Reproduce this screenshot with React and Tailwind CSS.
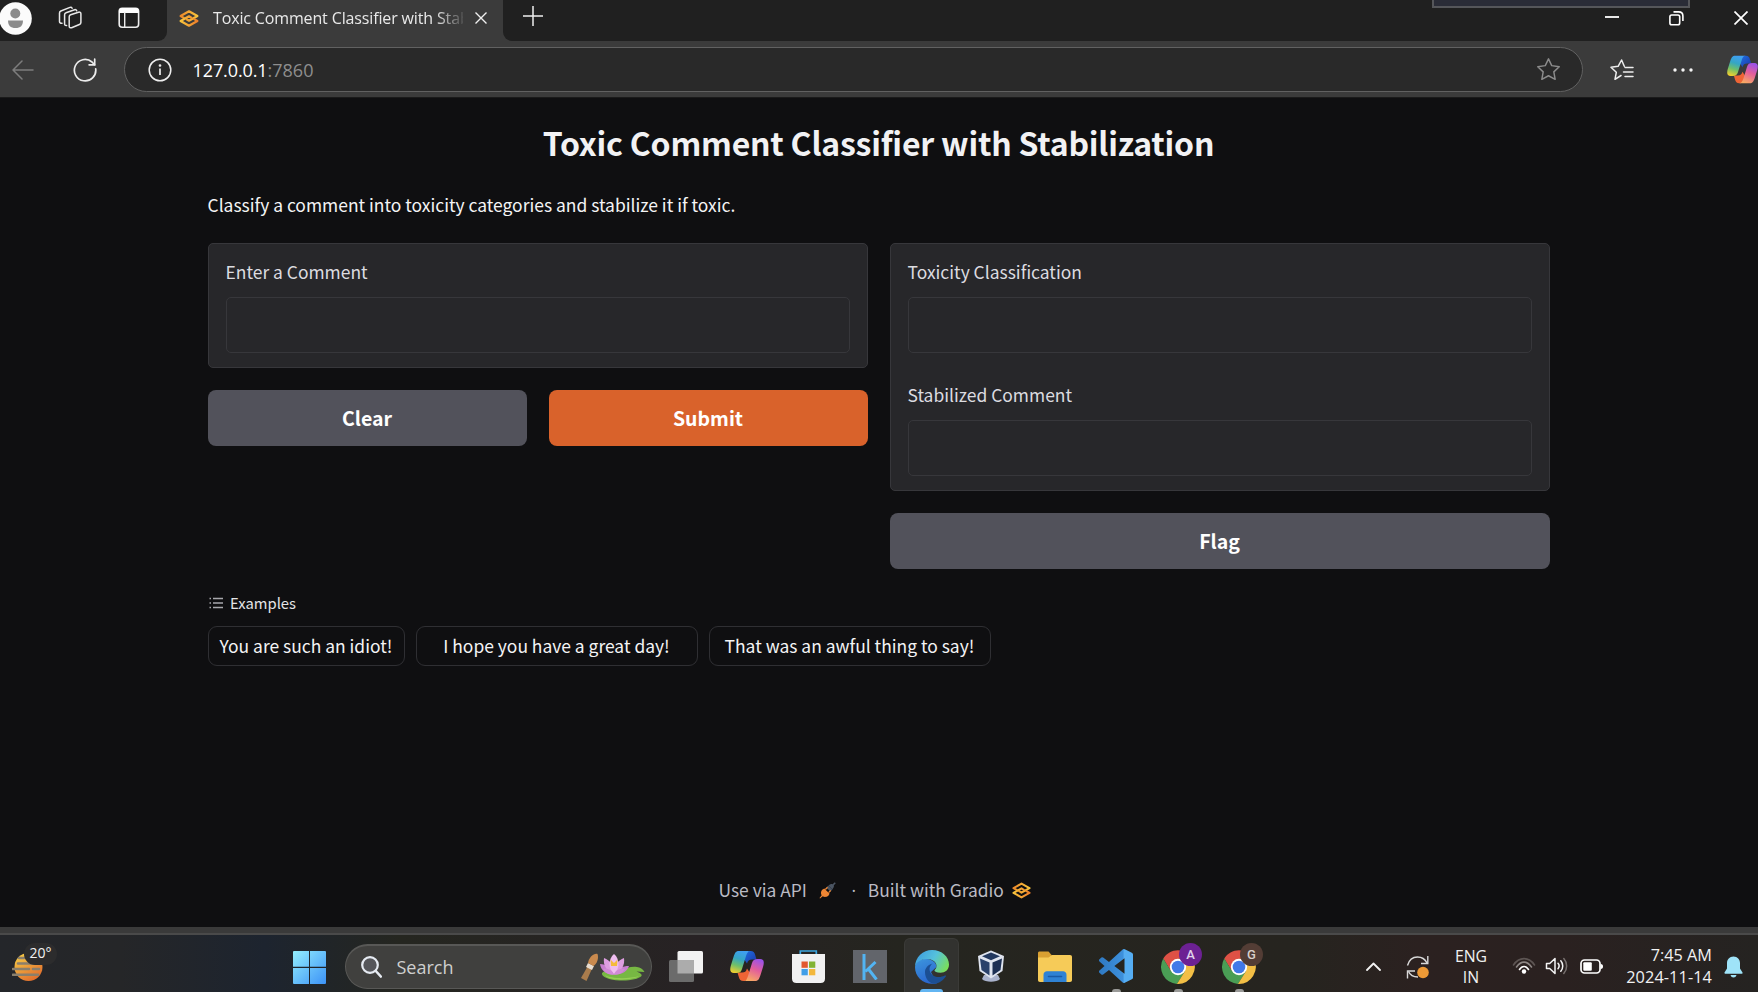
const SANS = "font-['Noto_Sans_CJK_SC','Open_Sans',sans-serif]";
const UI = "font-['Open_Sans','Noto_Sans',sans-serif]";

function T({ className = "", children }) {
  return <span className={`inline-block whitespace-nowrap ${className}`}>{children}</span>;
}

function GradioLogo({ className = "" }) {
  return (
    <svg viewBox="0 0 20 17" className={className} fill="none">
      <defs>
        <linearGradient id="grA" x1="0" y1="0" x2="1" y2="0">
          <stop offset="0" stopColor="#ee8a2a" />
          <stop offset="1" stopColor="#f8c43c" />
        </linearGradient>
        <linearGradient id="grB" x1="0" y1="0" x2="1" y2="0">
          <stop offset="0" stopColor="#f8c43c" />
          <stop offset="1" stopColor="#ee7f2a" />
        </linearGradient>
      </defs>
      <g strokeWidth="2.200" strokeLinejoin="round" strokeLinecap="round">
        <path stroke="url(#grA)" d="M4.800 7.900 1.600 6 10 1.300 18.400 6 10 10.700 7.600 9.200" />
        <path stroke="url(#grB)" d="M15.200 9.100 18.400 11 10 15.700 1.600 11 10 6.300 12.400 7.800" />
      </g>
    </svg>
  );
}

function Copilot({ className = "" }) {
  return (
    <svg viewBox="0 0 34 30" className={className}>
      <defs>
        <linearGradient id="cpL" x1="0.5" y1="0" x2="0.2" y2="1">
          <stop offset="0" stopColor="#3f9ff0" />
          <stop offset="0.35" stopColor="#35a6c4" />
          <stop offset="0.65" stopColor="#6fbf6a" />
          <stop offset="1" stopColor="#f5cf2c" />
        </linearGradient>
        <linearGradient id="cpR" x1="0.7" y1="0" x2="0.3" y2="1">
          <stop offset="0" stopColor="#9c52e8" />
          <stop offset="0.45" stopColor="#e25d9c" />
          <stop offset="1" stopColor="#f9ab62" />
        </linearGradient>
        <linearGradient id="cpT" x1="0" y1="0" x2="1" y2="1">
          <stop offset="0" stopColor="#1f6fe0" />
          <stop offset="1" stopColor="#1b37a8" />
        </linearGradient>
      </defs>
      <path fill="url(#cpT)" d="M14 8C16 2 17 0 20.500 0c3 0 4 1.500 4.700 4L26.500 8.500H22c-3 0-4 1-5 4Z" />
      <path fill="#ee6435" d="M20 22c-2 6-3 8-6.500 8-3 0-4-1.500-4.700-4L7.500 21.500H12c3 0 4-1 5-4Z" />
      <path fill="url(#cpL)" d="M9 0h11.500c-2.500 0-3.500 2-4.500 5l-4 13c-1 3-2.500 4-5.500 4H4c-4 0-4.500-3-3-8l2.500-8C5 1.500 6 0 9 0Z" />
      <path fill="url(#cpR)" d="M25 30H13.500c2.500 0 3.500-2 4.500-5l4-13c1-3 2.500-4 5.500-4H30c4 0 4.500 3 3 8l-2.500 8c-1.500 4.500-2.500 6-5.500 6Z" />
    </svg>
  );
}

function Chrome({ className = "" }) {
  return (
    <svg viewBox="0 0 48 48" className={className}>
      <path fill="#de5145" d="M24 24V12.500h20.700A24 24 0 0 0 3.200 12L14 30Z" />
      <path fill="#4a9e55" d="M3.200 12A24 24 0 0 0 22.500 47.950L34 30 24 24 14 29.800Z" />
      <path fill="#f3bf45" d="M44.700 12.500A24 24 0 0 1 22.500 47.950L34 29.800 24 24V12.500Z" />
      <circle cx="24" cy="24" r="11.500" fill="#fff" />
      <circle cx="24" cy="24" r="8.900" fill="#4279e8" />
    </svg>
  );
}

function Edge({ className = "" }) {
  return (
    <svg viewBox="0 0 34 34" className={className}>
      <defs>
        <linearGradient id="egT" x1="0" y1="0.3" x2="1" y2="0.7">
          <stop offset="0" stopColor="#3f9fe0" />
          <stop offset="0.5" stopColor="#55c1dc" />
          <stop offset="1" stopColor="#7be055" />
        </linearGradient>
        <linearGradient id="egM" x1="0" y1="0" x2="0.4" y2="1">
          <stop offset="0" stopColor="#3c96dd" />
          <stop offset="1" stopColor="#2b68cf" />
        </linearGradient>
      </defs>
      <path fill="url(#egM)" d="M0 17C1 10 7 8.500 12 9c6 .5 9.500 4 9.500 8L16 22l6 11.300C10 36 0 28 0 17Z" />
      <path fill="#1c4f93" d="M17.500 13.500C12 15 10 19 10 22c0 7 5 12 9.500 11.700 5-.5 9-3.500 11.300-7.200.6-1-.2-1.400-1-.9C22 29.500 14.500 25 14.500 19c0-2 1.500-4.500 3-5.500Z" />
      <path fill="url(#egT)" d="M0 17C0 7 8 0 17 0c10 0 17 7 17 14.500C34 20 30 22.700 25.500 22.700c-4 0-6-1.200-6-2.200s2-1.500 2-4.500c0-4-4-7-9.500-7C6 9 1 12 0 17Z" />
    </svg>
  );
}

function Lotus({ className = "" }) {
  return (
    <svg viewBox="0 0 64 28" className={className}>
      <path d="M0 25 8 11l4 2.500L5.500 28Z" fill="#a97c4c" />
      <path d="m7 10 6 3-2 4-6-3Z" fill="#e8ddd0" />
      <path d="M7 10C8 4 13 0 16.500 1 18 5 16 11 12.500 13Z" fill="#c98a4e" />
      <path d="M21 20c4-4 12-4 20-4 5 0 8-3 15-2 3 .5 6 2 7.500 5l-8-.5c5 2 5.500 3 5 4.500-3 3-12 5-22 4.500S20 24 21 20Z" fill="#77b843" />
      <path d="M24 22c6 4 24 4 34 1-4 4-30 6-34-1Z" fill="#96cf55" />
      <g fill="#c77fce">
        <path d="M33 21C24 22 20 17 19 11c6 0 12 4 14 10Z" />
        <path d="M33 21c9 1 13-3 15-8-6 0-13 2-15 8Z" />
      </g>
      <g fill="#dd9ee0">
        <path d="M33 21c-8-3-11-9-10-16 6 2 10 8 10 16Z" />
        <path d="M33 21c8-3 11-9 10-16-6 2-10 8-10 16Z" />
      </g>
      <path d="M33 21c-6-5-6-15 0-20 6 5 6 15 0 20Z" fill="#efbdf0" />
      <path d="M29.500 6.500 33 10l3.500-3.500L36 13H30Z" fill="#f4bb3c" />
      <path d="M33 22c-6 0-9-3-11-6 5-1 10 1 11 6Zm0 0c6 0 9-3 11-6-5-1-10 1-11 6Z" fill="#d18ad6" />
    </svg>
  );
}

function TitleBar() {
  return (
    <div className="relative flex h-[41px] shrink-0 bg-[#3b3b3b]">
      <div className="flex w-[167px] shrink-0 items-start rounded-br-[9px] bg-[#202020]">
        <svg viewBox="0 0 33 33" className="-ml-[1px] mt-[2px] h-[33px] w-[33px] shrink-0">
          <circle cx="16.500" cy="16.500" r="16.300" fill="#fbfbfb" />
          <circle cx="16.300" cy="11.500" r="5" fill="#8b8b8b" />
          <path d="M9 18.500h15c0 5-2.500 7.500-7.500 7.500S9 23.500 9 18.500Z" fill="#8b8b8b" />
        </svg>
        <svg viewBox="0 0 24 24" className="ml-[26px] mt-[6px] h-[24px] w-[24px] shrink-0" fill="none" stroke="#e8e8e8" strokeWidth="1.500" strokeLinejoin="round" strokeLinecap="round">
          <path d="M11.200 10.700c0-1 .5-1.600 1.400-1.900l7.900-2.600c1.300-.4 2.400.3 2.400 1.600v8.700c0 1-.5 1.700-1.500 2l-7.800 3.200c-1.300.5-2.400-.2-2.400-1.500Z" />
          <path d="M8.600 19.500c-1.200.3-2-.4-2-1.600V8.800c0-1 .5-1.700 1.400-2l8.600-3.100c1.100-.3 1.900.2 2.100 1.100" />
          <path d="M4 17.300c-1.500.2-2.500-.6-2.500-1.800V7c0-1 .5-1.600 1.400-2L12 1.400c1-.3 1.700 0 2.100.9" />
        </svg>
        <svg viewBox="0 0 22 22" className="ml-[36px] mt-[7px] h-[22px] w-[22px] shrink-0">
          <rect x="1.200" y="1.200" width="19.400" height="19" rx="3" fill="none" stroke="#eee" strokeWidth="1.600" />
          <path d="M1 6V4c0-1.800 1-3 3-3h13.800c2 0 3 1.200 3 3v2Z" fill="#fff" />
          <path d="M6.700 5v15" stroke="#eee" strokeWidth="1.400" />
        </svg>
      </div>
      <div className="flex w-[336px] shrink-0">
        <GradioLogo className="ml-[12px] mt-[10px] h-[17px] w-[20px] shrink-0" />
        <div className={`ml-[14px] mt-[7px] w-[250px] shrink-0 overflow-hidden whitespace-nowrap text-[16px] leading-[22px] tracking-[-0.14px] text-[#e9e9e9] [mask-image:linear-gradient(90deg,#000_222px,transparent_254px)] ${UI}`}>
          Toxic Comment Classifier with Stabilization
        </div>
        <svg viewBox="0 0 12 12" className="ml-[12px] mt-[12px] h-[12px] w-[12px] shrink-0" stroke="#f0f0f0" strokeWidth="1.400">
          <path d="m.5.5 11 11M11.500.5l-11 11" />
        </svg>
      </div>
      <div className="flex flex-1 rounded-bl-[9px] bg-[#202020]">
        <svg viewBox="0 0 20 20" className="ml-[20px] mt-[6px] h-[20px] w-[20px] shrink-0" stroke="#eee" strokeWidth="1.500">
          <path d="M10 0v20M0 10h20" />
        </svg>
        <div className="ml-[889px] h-[8px] w-[258px] shrink-0 border-2 border-t-0 border-[#55565a] bg-[#2a2c37]" />
      </div>
      <div className="absolute right-0 top-0 flex h-[41px] items-start">
        <svg viewBox="0 0 14 2" className="mt-[16px] h-[2px] w-[14px]"><path d="M0 1h14" stroke="#fff" strokeWidth="1.800" /></svg>
        <svg viewBox="0 0 15 15" className="ml-[50px] mt-[11px] h-[15px] w-[15px]" fill="none" stroke="#fff" strokeWidth="1.600">
          <rect x="0.900" y="4" width="9.800" height="9.800" rx="1.800" />
          <path d="M4.500.9h5.200c2.600 0 4.200 1.600 4.200 4.200v5" />
        </svg>
        <svg viewBox="0 0 14 14" className="ml-[50px] mr-[10px] mt-[11px] h-[14px] w-[14px]" stroke="#fff" strokeWidth="1.700"><path d="m.5.5 13 13M13.500.5l-13 13" /></svg>
      </div>
    </div>
  );
}

function Toolbar() {
  return (
    <div className="flex h-[57px] shrink-0 items-center border-b border-[#1b1b1b] bg-[#3b3b3b] pt-[1px]">
      <svg viewBox="0 0 22 20" className="ml-[12px] h-[20px] w-[22px] shrink-0" fill="none" stroke="#7d7d7d" strokeWidth="1.500" strokeLinecap="round" strokeLinejoin="round">
        <path d="M21 10H1M10 1 1 10l9 9" />
      </svg>
      <svg viewBox="0 0 24 24" className="ml-[39px] h-[24px] w-[24px] shrink-0" fill="none" stroke="#ececec" strokeWidth="1.700" strokeLinecap="round">
        <path d="M22.700 10.800A10.700 10.700 0 1 1 19 4l2.500 2.600" />
        <path d="M21.700 1.200v5.600h-5.600" />
      </svg>
      <div className="ml-[27px] flex h-[45px] w-[1459px] shrink-0 items-center rounded-full border-[1.5px] border-[#616161] bg-[#292929]">
        <svg viewBox="0 0 24 24" className="ml-[23px] h-[24px] w-[24px]" fill="none" stroke="#eee" strokeWidth="1.500">
          <circle cx="12" cy="12" r="10.800" />
          <path d="M12 10.500v6.500" strokeWidth="1.700" />
          <circle cx="12" cy="7.500" r="0.600" fill="#eee" />
        </svg>
        <div className={`ml-[20.500px] flex text-[18px] leading-[24px] ${UI}`}>
          <T className="tracking-[-0.1px] text-white">127.0.0.1</T>
          <T className="text-[#8e8e8e]">:7860</T>
        </div>
        <svg viewBox="0 0 24 24" className="ml-auto mr-[21px] h-[25px] w-[25px]" fill="none" stroke="#8b8b8b" strokeWidth="1.400" strokeLinejoin="round">
          <path d="m12 1.800 3.100 6.500 7.200 1-5.200 5 1.300 7.100-6.400-3.400-6.400 3.400 1.300-7.100-5.200-5 7.200-1Z" />
        </svg>
      </div>
      <svg viewBox="0 0 24 24" className="ml-[27px] h-[24px] w-[24px] shrink-0" fill="none" stroke="#eee" strokeWidth="1.500" strokeLinejoin="round" strokeLinecap="round">
        <path d="M11 17.500 5 21.300l1.300-7L1 9.300l7.100-1L11.600 2l2.700 6.300" />
        <path d="M15 9.500h8M13.500 14h9.500M15 18.500h8" />
      </svg>
      <svg viewBox="0 0 20 4" className="ml-[39px] h-[4px] w-[20px] shrink-0" fill="#f5f5f5">
        <circle cx="2" cy="2" r="1.700" /><circle cx="10" cy="2" r="1.700" /><circle cx="18" cy="2" r="1.700" />
      </svg>
      <Copilot className="ml-[34px] h-[29px] w-[31px] shrink-0" />
    </div>
  );
}

function Field({ label, className = "" }) {
  return (
    <div className={`flex flex-col px-[17px] ${className}`}>
      <T className="self-start text-[17.45px] leading-[26px] text-[#dcdce0]">{label}</T>
      <div className="mt-[12px] h-[56px] rounded-[5px] border border-[#37373b]" />
    </div>
  );
}

const BTN = "flex h-[56px] items-center justify-center rounded-[8px] pb-[1px] text-[19.5px] font-bold text-white";
const CHIP = "flex h-[40px] items-center justify-center rounded-[9px] border border-[#2f2f33] text-[17.45px] text-[#f4f4f5]";

function Page() {
  return (
    <main className={`flex h-[829px] shrink-0 flex-col bg-[#0f0f11] pl-[207.5px] pr-[208.5px] ${SANS}`}>
      <h1 className="mt-[20px] text-center text-[32px] font-bold leading-[48px] tracking-[-0.22px] text-[#f2f2f4]">
        Toxic Comment Classifier with Stabilization
      </h1>
      <p className="mt-[25px] text-[17.45px] leading-[28px] text-[#f4f4f5]">
        Classify a comment into toxicity categories and stabilize it if toxic.
      </p>
      <div className="mt-[24px] grid grid-cols-2 gap-[22px]">
        <div className="flex flex-col">
          <div className="h-[125px] rounded-[5px] border border-[#37373b] bg-[#27272a] pt-[15px]">
            <Field label="Enter a Comment" />
          </div>
          <div className="mt-[22px] grid grid-cols-2 gap-[22px]">
            <button className={`${BTN} bg-[#52525b]`}>Clear</button>
            <button className={`${BTN} bg-[#d9622b]`}>Submit</button>
          </div>
        </div>
        <div className="flex flex-col">
          <div className="h-[248px] rounded-[5px] border border-[#37373b] bg-[#27272a] pt-[15px]">
            <Field label="Toxicity Classification" />
            <Field label="Stabilized Comment" className="mt-[29px]" />
          </div>
          <button className={`${BTN} mt-[22px] bg-[#52525b]`}>Flag</button>
        </div>
      </div>
      <div className="mt-[23px] flex h-[22px] items-center text-[14.8px] leading-[22px] text-[#e4e4e7]">
        <svg viewBox="0 0 14 12" className="ml-[1px] h-[12px] w-[14px]" stroke="#a8a8ad" strokeWidth="1.400">
          <path d="M4 1.500h10M4 6h10M4 10.500h10" />
          <path d="M.5 1.500H2M.5 6H2M.5 10.500H2" />
        </svg>
        <T className="ml-[7.5px]">Examples</T>
      </div>
      <div className="mt-[12px] flex gap-[11px]">
        <div className={`${CHIP} w-[197px]`}>You are such an idiot!</div>
        <div className={`${CHIP} w-[282px]`}>I hope you have a great day!</div>
        <div className={`${CHIP} w-[282px]`}>That was an awful thing to say!</div>
      </div>
      <footer className="mb-[23px] mt-auto flex h-[28px] items-center text-[17.4px] leading-[28px] text-[#bbbbc4]">
        <T className="ml-[511px]">Use via API</T>
        <svg viewBox="0 0 16 16" className="ml-[12px] h-[17px] w-[17px]">
          <path d="M9 3.500C11 1.500 13 1.800 13.600 2.400S14.500 5 12.500 7Z" fill="#4b5563" />
          <path d="m13.300 2.700 2-2" stroke="#4b5563" strokeWidth="1.400" />
          <path d="m8.600 3.400 4 4-2 1.500-3.600-3.500Z" fill="#4b5563" />
          <path d="M3 7.200 5 6l5 5-1.200 2c-1.600 1.400-4 1.400-5.300.5L1 15.500.5 15l2-2.500C1.500 11 1.700 8.600 3 7.200Z" fill="#ef8634" />
          <path d="m6 7 2-2M9 10l2-2" stroke="#ef8634" strokeWidth="1.200" />
        </svg>
        <span className="ml-[14px] flex w-[8px] justify-center font-['Open_Sans']">·</span>
        <T className="ml-[10px]">Built with Gradio</T>
        <GradioLogo className="ml-[8px] h-[17px] w-[19px]" />
      </footer>
    </main>
  );
}

function Taskbar() {
  return (
    <div className={`flex h-[57px] shrink-0 items-start bg-[linear-gradient(90deg,#24262a_0px,#252628_120px,#1d242f_265px,#252620_400px,#272224_700px,#25251f_900px,#26241f_1300px,#2b2120_1420px,#2a2120_1560px,#252321_1758px)] text-[#f1f1f1] ${UI}`}>
      <div className="relative ml-[12px] mt-[17px] h-[30px] w-[32px] shrink-0">
        <svg viewBox="0 0 32 30" className="h-[30px] w-[32px]">
          <defs>
            <linearGradient id="sun" x1="0.200" y1="0" x2="0.800" y2="1">
              <stop offset="0" stopColor="#f6cb45" />
              <stop offset="1" stopColor="#e0672c" />
            </linearGradient>
          </defs>
          <circle cx="16.500" cy="15" r="14" fill="url(#sun)" />
          <path d="M7 6h5M6 11.500h18M1 17h16M21 17h6M1 22.700h25" stroke="#8a7f6c" strokeWidth="2.600" strokeLinecap="round" />
        </svg>
        <div className="absolute left-[12px] top-[-9px] flex h-[22px] w-[33px] items-center justify-center rounded-full bg-[#2c2c2d] pb-[2px] text-[14px] leading-[18px]">
          20°
        </div>
      </div>
      <svg viewBox="0 0 33 33" className="ml-[249px] mt-[16px] h-[33px] w-[33px] shrink-0">
        <defs>
          <linearGradient id="win" x1="0" y1="0" x2="33" y2="33" gradientUnits="userSpaceOnUse">
            <stop offset="0" stopColor="#93eefd" />
            <stop offset="1" stopColor="#3c92f7" />
          </linearGradient>
        </defs>
        <path fill="url(#win)" d="M1 0h15v15.700H0V1a1 1 0 0 1 1-1ZM17 0h15a1 1 0 0 1 1 1v14.700H17ZM0 17h16v16H1a1 1 0 0 1-1-1ZM17 17h16v15a1 1 0 0 1-1 1H17Z" />
      </svg>
      <div className="ml-[18.500px] mt-[9px] flex h-[45px] w-[307px] shrink-0 items-center rounded-full border border-t-2 border-[#585856] bg-[#40403e]">
        <svg viewBox="0 0 21 22" className="ml-[15px] h-[22px] w-[21px]" fill="none" stroke="#e6ebf2" strokeWidth="2.200" strokeLinecap="round">
          <circle cx="9" cy="9" r="7.800" fill="#55565a" />
          <path d="m14.800 15 5 5.500" strokeWidth="2.600" />
        </svg>
        <T className="ml-[15px] pb-[1px] text-[18px] leading-[24px] text-[#cfcfcf]">Search</T>
        <Lotus className="ml-auto mr-[6px] h-[28px] w-[64px]" />
      </div>
      <svg viewBox="0 0 34 31" className="ml-[17.500px] mt-[16px] h-[31px] w-[34px] shrink-0">
        <rect x="8.500" y="0" width="25.500" height="22.500" rx="1.500" fill="#f2f2f2" />
        <rect x="0" y="9" width="25" height="22" rx="1.500" fill="#6b6b6b" />
        <path d="M8.500 9H25v13.500H8.500Z" fill="#acacac" />
      </svg>
      <Copilot className="ml-[27px] mt-[16px] h-[30px] w-[34px] shrink-0" />
      <svg viewBox="0 0 33 33" className="ml-[28px] mt-[15px] h-[33px] w-[33px] shrink-0">
        <path d="M8.300 5V1h16v4" fill="none" stroke="#3da6e0" strokeWidth="1.700" />
        <path d="M0 4h33v24.500c0 3-1.500 4.500-4.500 4.500h-24C1.500 33 0 31.500 0 28.500Z" fill="#f1f1f1" />
        <path d="M9.500 11.500h6.300v6.300H9.500Z" fill="#e2582f" /><path d="M17 11.500h6.300v6.300H17Z" fill="#82b433" />
        <path d="M9.500 19h6.300v6.300H9.500Z" fill="#419fe8" /><path d="M17 19h6.300v6.300H17Z" fill="#f3b83c" />
      </svg>
      <div className="ml-[28px] mt-[15px] flex h-[33px] w-[34px] shrink-0 items-center justify-center bg-[#62656b]">
        <svg viewBox="0 0 16 26" className="h-[26px] w-[16px]" fill="none" stroke="#52b4f2" strokeWidth="3">
          <path d="M2 0v26M13.500 8 3.500 17.500M6 14.500l8.500 11" />
        </svg>
      </div>
      <div className="ml-[17px] mt-[3px] flex h-[54px] w-[55px] shrink-0 flex-col items-center rounded-t-[6px] border border-b-0 border-[#3b3b38] bg-[#32322f]">
        <Edge className="mt-[11px] h-[34px] w-[34px]" />
        <div className="mt-[5px] h-[3px] w-[23px] rounded-t-[3px] bg-[#62b5f2]" />
      </div>
      <svg viewBox="0 0 28 32" className="ml-[18px] mt-[15px] h-[32px] w-[28px] shrink-0">
        <path d="M7 25h14l2 4c-3 3.500-15 3.500-18 0Z" fill="#a9b2cc" />
        <path d="M14 .5 27 6l-1.500 15L14 28.500 2.500 21 1 6Z" fill="#dfe4ef" />
        <path d="M14 2.500 23 6.200l-9 4-9-4Z" fill="#22385f" />
        <path d="m3 8.500 9.500 4v13L4.500 20Z" fill="#2a416b" />
        <path d="m25 8.500-9.500 4v13l8-5.500Z" fill="#1c2f54" />
      </svg>
      <svg viewBox="0 0 34 31" className="ml-[33px] mt-[16px] h-[31px] w-[34px] shrink-0">
        <path d="M0 2c0-1 .7-1.500 1.500-1.500h9L14 4.500V8H0Z" fill="#d9a032" />
        <path d="M0 6.500h10.500L14 4h18c1.300 0 2 .7 2 2v23c0 1.300-.7 2-2 2H2c-1.300 0-2-.7-2-2Z" fill="#f6cb58" />
        <path d="M5.500 31v-7c0-2.500 1.500-3.700 3.500-3.700h16c2 0 3.500 1.200 3.500 3.700v7Z" fill="#2f82d4" />
        <path d="M10.500 25.500h13" stroke="#1a5aa5" strokeWidth="1.600" strokeLinecap="round" />
      </svg>
      <div className="ml-[27px] mt-[14px] flex h-[43px] shrink-0 flex-col items-center justify-between">
        <svg viewBox="0 0 24 24" className="h-[34px] w-[34px]">
          <defs>
            <linearGradient id="vs" x1="0" y1="0" x2="1" y2="0">
              <stop offset="0" stopColor="#2f79c2" />
              <stop offset="0.700" stopColor="#3d90dc" />
              <stop offset="0.750" stopColor="#55adf2" />
            </linearGradient>
          </defs>
          <path fill="url(#vs)" d="M23.150 2.587L18.210.21a1.494 1.494 0 0 0-1.705.29l-9.460 8.630-4.120-3.128a.999.999 0 0 0-1.276.057L.327 7.261A1 1 0 0 0 .326 8.740L3.899 12 .326 15.260a1 1 0 0 0 .001 1.479L1.650 17.940a.999.999 0 0 0 1.276.057l4.120-3.128 9.460 8.630a1.492 1.492 0 0 0 1.704.290l4.942-2.377A1.500 1.500 0 0 0 24 20.060V3.939a1.500 1.500 0 0 0-.850-1.352zm-5.146 14.861L10.826 12l7.178-5.448v10.896z" />
        </svg>
        <div className="h-[3px] w-[9px] rounded-t-[3px] bg-[#9a9a98]" />
      </div>
      <div className="relative ml-[28px] mt-[15px] flex h-[42px] shrink-0 flex-col items-center justify-between">
        <Chrome className="h-[34px] w-[34px]" />
        <div className="h-[3px] w-[9px] rounded-t-[3px] bg-[#9a9a98]" />
        <div className="absolute left-[18px] top-[-7px] flex h-[23px] w-[23px] items-center justify-center rounded-full bg-[#6c2193] font-[Roboto] text-[13px] font-medium text-[#e0d2ea]">A</div>
      </div>
      <div className="relative ml-[27px] mt-[15px] flex h-[42px] shrink-0 flex-col items-center justify-between">
        <Chrome className="h-[34px] w-[34px]" />
        <div className="h-[3px] w-[9px] rounded-t-[3px] bg-[#9a9a98]" />
        <div className="absolute left-[18px] top-[-7px] flex h-[23px] w-[23px] items-center justify-center rounded-full bg-[#533d35] font-[Roboto] text-[13px] font-medium text-[#d8d0cc]">G</div>
      </div>
      <svg viewBox="0 0 15 9" className="ml-[110px] mt-[27px] h-[9px] w-[15px] shrink-0" fill="none" stroke="#f1f1f1" strokeWidth="1.800" strokeLinecap="round" strokeLinejoin="round"><path d="m1 8 6.500-6.500L14 8" /></svg>
      <svg viewBox="0 0 24 24" className="ml-[25px] mt-[20px] h-[24px] w-[24px] shrink-0" fill="none" stroke="#d8d8d8" strokeWidth="1.400">
        <path d="M1.500 10.500C3 5 7 2 11.500 2c4 0 7.500 2 9.500 6" />
        <path d="M21.800 1v7.500H15" />
        <path d="M12 22C8 22 4 20 2.500 16.500" />
        <path d="M1.500 23.500V16H9" />
        <circle cx="17" cy="17.500" r="5.800" fill="#ee9a36" stroke="none" />
      </svg>
      <div className="ml-[23px] mt-[11px] flex w-[36px] shrink-0 flex-col items-center text-[15.8px] leading-[21px]">
        <T>ENG</T>
        <T>IN</T>
      </div>
      <svg viewBox="0 0 24 18" className="ml-[23px] mt-[22px] h-[18px] w-[24px] shrink-0" fill="none" strokeWidth="1.600" strokeLinecap="round">
        <path d="M1.500 8C7-.5 17-.5 22.500 8" stroke="#5d5553" />
        <path d="M4.500 10C9 3.500 15 3.500 19.500 10" stroke="#8d8684" />
        <path d="M7.500 12.500c2.500-4 6.500-4 9 0" stroke="#fff" />
        <circle cx="12" cy="14.500" r="2.200" fill="#fff" />
      </svg>
      <svg viewBox="0 0 24 20" className="ml-[9px] mt-[21px] h-[20px] w-[24px] shrink-0" fill="none" stroke="#f4f4f4" strokeWidth="1.500" strokeLinecap="round" strokeLinejoin="round">
        <path d="M1.500 7.500h3.200L10 2.500v15l-5.300-5H1.500Z" />
        <path d="M13 7.300c1.300 1.500 1.300 3.900 0 5.400M15.800 4.800c2.600 3 2.600 7.400 0 10.400" />
        <path d="M18.800 2.500c3.800 4.300 3.800 10.700 0 15" stroke="#77706e" />
      </svg>
      <svg viewBox="0 0 24 15" className="ml-[11px] mt-[24px] h-[15px] w-[24px] shrink-0">
        <rect x="1" y="1" width="19" height="13" rx="3.500" fill="none" stroke="#fff" strokeWidth="1.700" />
        <rect x="3.300" y="3.300" width="8.500" height="8.400" rx="1" fill="#fff" />
        <path d="M20.500 5c2 0 2.500 1 2.500 2.500S22.500 10 20.500 10Z" fill="#fff" />
      </svg>
      <div className="ml-auto mt-[9px] flex shrink-0 flex-col items-end text-[16.3px] leading-[22px]">
        <T>7:45 AM</T>
        <T className="tracking-[0.08px]">2024-11-14</T>
      </div>
      <svg viewBox="0 0 19 22" className="ml-[12px] mr-[15px] mt-[21px] h-[22px] w-[19px] shrink-0" fill="#9fe3f8">
        <path d="M9.500.5c4 0 6.500 3 6.500 6.500v5.500l2.500 4c.3.800 0 1.200-.7 1.200H1.200c-.7 0-1-.4-.7-1.200l2.500-4V7C3 3.500 5.500.5 9.500.5Z" />
        <path d="M6.500 19h6c-.5 1.700-1.500 2.500-3 2.500s-2.500-.8-3-2.500Z" />
      </svg>
    </div>
  );
}

export default function App() {
  return (
    <div className="flex h-[992px] w-[1758px] flex-col overflow-hidden bg-[#0f0f11]">
      <TitleBar />
      <Toolbar />
      <Page />
      <div className="h-[8px] shrink-0 border-b-2 border-[#4a4a4a] bg-[#3a3a3a]" />
      <Taskbar />
    </div>
  );
}
